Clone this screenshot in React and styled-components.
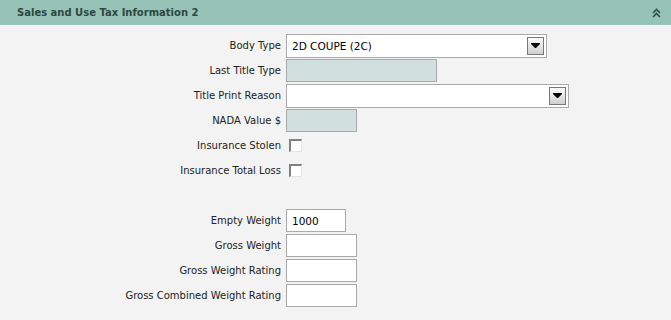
import React from 'react';
import styled, { createGlobalStyle } from 'styled-components';

const GlobalStyle = createGlobalStyle`
  html, body {
    margin: 0;
    padding: 0;
    background: #f3f3f3;
  }
  body {
    font-family: Tahoma, "DejaVu Sans", sans-serif;
  }
`

const fields = [
  { label: 'Body Type', type: 'select', width: 261, value: '2D COUPE (2C)' },
  { label: 'Last Title Type', type: 'input', width: 151, disabled: true },
  { label: 'Title Print Reason', type: 'select', width: 283, value: '' },
  { label: 'NADA Value $', type: 'input', width: 71, disabled: true },
  { label: 'Insurance Stolen', type: 'check' },
  { label: 'Insurance Total Loss', type: 'check' },
  { type: 'spacer' },
  { label: 'Empty Weight', type: 'input', width: 60, value: '1000' },
  { label: 'Gross Weight', type: 'input', width: 71 },
  { label: 'Gross Weight Rating', type: 'input', width: 71 },
  { label: 'Gross Combined Weight Rating', type: 'input', width: 71 },
];

const App = () => {
  return (
    <>
      <GlobalStyle />
      <Panel>
        <Header>
          <Title>Sales and Use Tax Information 2</Title>
          <Collapse title="collapse">
            <svg width="9" height="10" viewBox="0 0 9 10">
              <path d="M1 5 L4.5 1.5 L8 5 M1 9 L4.5 5.5 L8 9" fill="none" stroke="#2f4f49" strokeWidth="1.6" />
            </svg>
          </Collapse>
        </Header>
        <Body>
          {fields.map((f, i) => f.type === 'spacer'
            ? <Spacer key={i} />
            : (
              <Row key={i}>
                <Label>{f.label}</Label>
                <Field field={f} />
              </Row>
            )
          )}
        </Body>
      </Panel>
    </>
  )
}


const Field = ({ field }) => {
  if (field.type === 'select') {
    return (
      <SelectBox width={field.width}>
        <span className="text">{field.value}</span>
        <DropButton>
          <svg width="9" height="6" viewBox="0 0 9 6">
            <path d="M0 0 H9 V1 L5 5 H4 L0 1 Z" fill="#000" />
          </svg>
        </DropButton>
      </SelectBox>
    )
  }
  if (field.type === 'check') {
    return <CheckBox />
  }
  return <TextInput width={field.width} disabled={field.disabled}>{field.value}</TextInput>
}


const Panel = styled.div`
  width: 671px;
  min-height: 320px;
  background: #f3f3f3;
`

const Header = styled.div`
  display: flex;
  align-items: center;
  justify-content: space-between;
  height: 25px;
  padding: 0 10px 0 17px;
  background: #97c2b6;
`

const Title = styled.div`
  color: #2d4842;
  font-size: 10px;
  font-weight: bold;
`

const Collapse = styled.div`
  display: flex;
  cursor: pointer;
  svg {
    display: block;
  }
`

const Body = styled.div`
  display: flex;
  flex-direction: column;
  padding-top: 8px;
`

const Row = styled.div`
  display: grid;
  grid-template-columns: 281px 1fr;
  column-gap: 5px;
  align-items: center;
  height: 25px;
`

const Spacer = styled.div`
  height: 25px;
`

const Label = styled.div`
  text-align: right;
  color: #222;
  font-size: 10px;
  white-space: nowrap;
`

const SelectBox = styled.div`
  display: flex;
  align-items: center;
  justify-content: space-between;
  width: ${({ width }) => width}px;
  height: 24px;
  box-sizing: border-box;
  border: 1px solid #aaa;
  background: #fff;
  padding: 0 2px 0 5px;
  > .text {
    color: #000;
    font-size: 10.5px;
  }
`

const DropButton = styled.div`
  display: flex;
  align-items: center;
  justify-content: center;
  width: 17px;
  height: 18px;
  box-sizing: border-box;
  border: 1px solid #777;
  background: linear-gradient(#fdfdfd, #cfcfcf);
  svg {
    display: block;
    margin-top: 1px;
  }
`

const TextInput = styled.div`
  display: flex;
  align-items: center;
  width: ${({ width }) => width}px;
  height: 23px;
  box-sizing: border-box;
  border: 1px solid #a9a9a9;
  background: ${({ disabled }) => disabled ? '#d1dfdf' : '#fff'};
  padding: 0 5px;
  color: #000;
  font-size: 10.5px;
`

const CheckBox = styled.div`
  width: 13px;
  height: 13px;
  margin-left: 3px;
  box-sizing: border-box;
  border-top: 2px solid #808080;
  border-left: 2px solid #808080;
  border-right: 1px solid #e4e4e4;
  border-bottom: 1px solid #e4e4e4;
  background: #fff;
`

export default App;
